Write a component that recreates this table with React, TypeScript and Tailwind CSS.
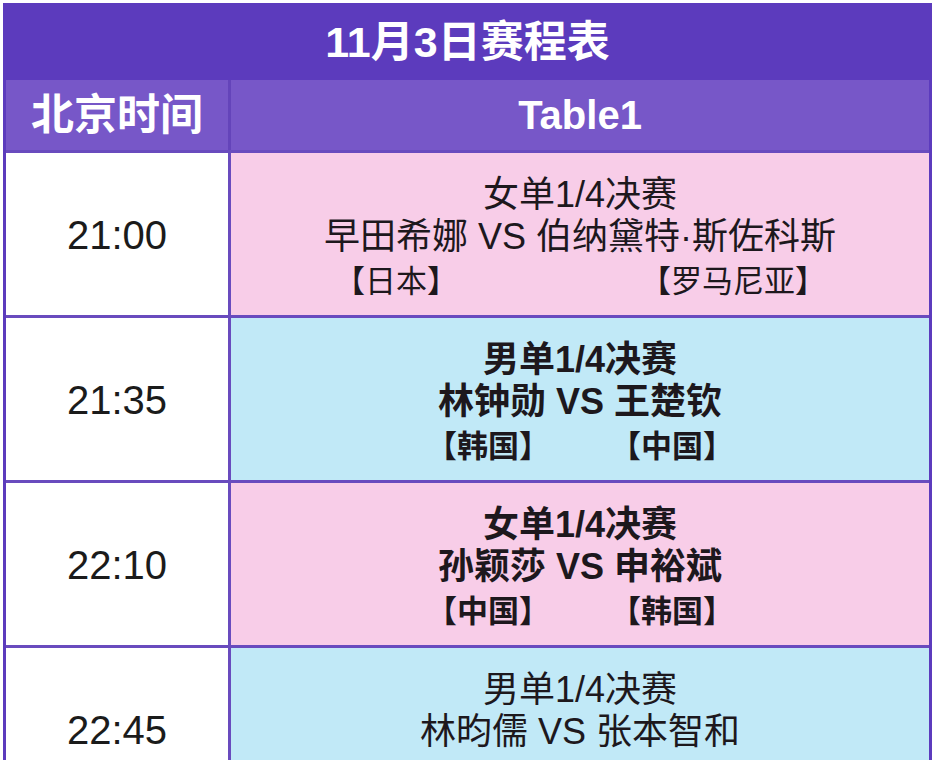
const font = "font-['Liberation_Sans','Noto_Sans_CJK_SC',sans-serif]";

interface Match {
  time: string;
  event: string;
  left: string;
  right: string;
  leftFrom: string;
  rightFrom: string;
  tone: "pink" | "blue";
  bold?: boolean;
  fromClass: string;
}

const matches: Match[] = [
  {
    time: "21:00",
    event: "女单1/4决赛",
    left: "早田希娜",
    right: "伯纳黛特·斯佐科斯",
    leftFrom: "【日本】",
    rightFrom: "【罗马尼亚】",
    tone: "pink",
    fromClass: "gap-[182px]",
  },
  {
    time: "21:35",
    event: "男单1/4决赛",
    left: "林钟勋",
    right: "王楚钦",
    leftFrom: "【韩国】",
    rightFrom: "【中国】",
    tone: "blue",
    bold: true,
    fromClass: "gap-[60px]",
  },
  {
    time: "22:10",
    event: "女单1/4决赛",
    left: "孙颖莎",
    right: "申裕斌",
    leftFrom: "【中国】",
    rightFrom: "【韩国】",
    tone: "pink",
    bold: true,
    fromClass: "gap-[60px]",
  },
  {
    time: "22:45",
    event: "男单1/4决赛",
    left: "林昀儒",
    right: "张本智和",
    leftFrom: "【中国台北】",
    rightFrom: "【日本】",
    tone: "blue",
    fromClass: "gap-[40px]",
  },
];

function MatchRow({ m }: { m: Match }) {
  const bg = m.tone === "pink" ? "bg-[#f8cde8]" : "bg-[#c1e9f7]";
  return (
    <div className="flex h-[165px] border-t-[3px] border-[#694bbe]">
      <div className="w-[222px] flex items-center justify-center bg-white pt-[2px]">
        <span className="text-[40px] leading-none text-[#1b1b1b]">{m.time}</span>
      </div>
      <div
        className={`flex-1 flex flex-col items-center justify-center pt-[9px] border-l-[3px] border-[#694bbe] text-[#1d181d] ${bg} ${
          m.bold ? "font-bold" : "font-normal"
        }`}
      >
        <p className="text-[36px] leading-[42px] whitespace-nowrap">{m.event}</p>
        <p className="text-[36px] leading-[42px] whitespace-nowrap">
          {m.left} VS {m.right}
        </p>
        <div className={`flex justify-center mt-[3px] text-[31px] leading-[42px] whitespace-nowrap ${m.fromClass}`}>
          <span>{m.leftFrom}</span>
          <span>{m.rightFrom}</span>
        </div>
      </div>
    </div>
  );
}

export default function App() {
  return (
    <div className={`h-[760px] overflow-hidden bg-white pt-[3px] pl-[3px] ${font}`}>
      <div className="w-[929px] border-x-[3px] border-t-[3px] border-[#5c3bbd]">
        <div className="h-[74px] bg-[#5c3bbd] flex items-center justify-center">
          <h1 className="text-[43px] font-bold text-white leading-none pb-[2px]">11月3日赛程表</h1>
        </div>
        <div className="flex h-[70px] bg-[#7757c8]">
          <div className="w-[222px] flex items-center justify-center">
            <span className="text-[43px] font-bold text-white leading-none">北京时间</span>
          </div>
          <div className="flex-1 flex items-center justify-center border-l-[3px] border-[#6444ba]">
            <span className="text-[40px] font-bold text-white leading-none">Table1</span>
          </div>
        </div>
        {matches.map((m) => (
          <MatchRow key={m.time} m={m} />
        ))}
      </div>
    </div>
  );
}
